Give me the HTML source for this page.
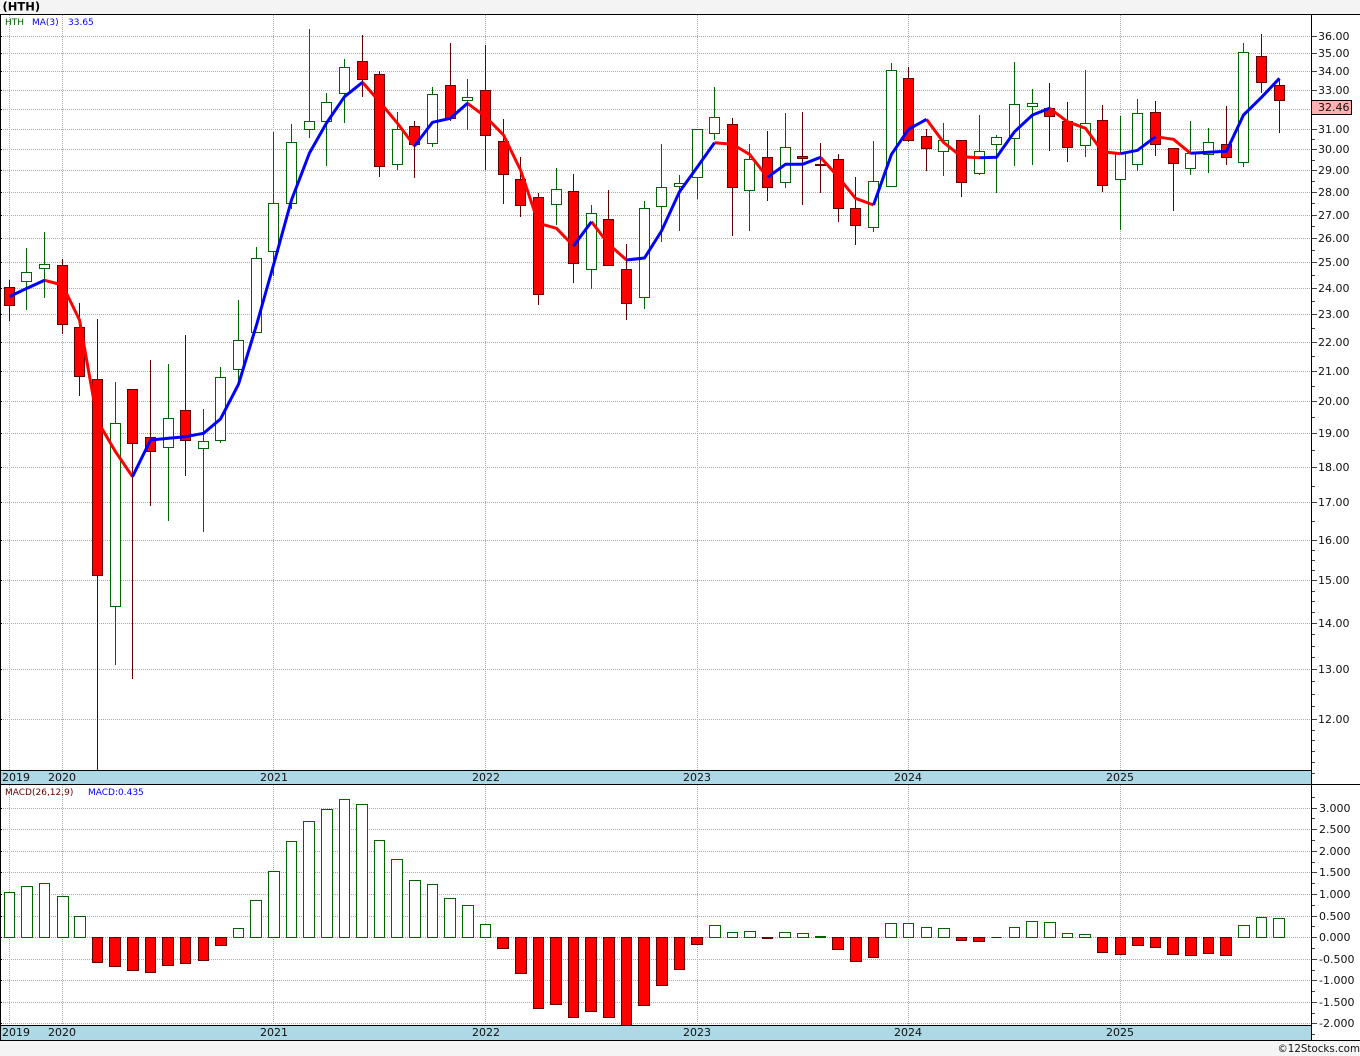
<!DOCTYPE html>
<html><head><meta charset="utf-8"><title>HTH</title>
<style>
html,body{margin:0;padding:0;background:#f4f4f4;width:1360px;height:1056px;overflow:hidden}
svg{display:block;font-family:"DejaVu Sans","Liberation Sans",sans-serif}
.c{shape-rendering:crispEdges}
</style></head><body>
<svg width="1360" height="1056" viewBox="0 0 1360 1056" xmlns="http://www.w3.org/2000/svg">
<rect x="0" y="0" width="1360" height="1056" fill="#f4f4f4"/>
<rect x="0" y="15" width="1360" height="1025" fill="#fff"/>
<rect class="c" x="1" y="771" width="1310" height="13" fill="#add8e6"/>
<rect class="c" x="1" y="1026" width="1310" height="14" fill="#add8e6"/>

<g class="c" stroke="#a9a9a9" stroke-width="1" stroke-dasharray="1 1" fill="none">
<path d="M1 36.5H1311M1 53.5H1311M1 71.5H1311M1 90.5H1311M1 109.5H1311M1 129.5H1311M1 149.5H1311M1 170.5H1311M1 192.5H1311M1 215.5H1311M1 238.5H1311M1 262.5H1311M1 288.5H1311M1 314.5H1311M1 342.5H1311M1 371.5H1311M1 401.5H1311M1 433.5H1311M1 467.5H1311M1 502.5H1311M1 540.5H1311M1 580.5H1311M1 623.5H1311M1 669.5H1311M1 719.5H1311"/>
<path d="M1 808.5H1311M1 829.5H1311M1 851.5H1311M1 872.5H1311M1 894.5H1311M1 916.5H1311M1 937.5H1311M1 959.5H1311M1 980.5H1311M1 1002.5H1311M1 1023.5H1311"/>
<path d="M9.5 15V770M62.5 15V770M273.5 15V770M485.5 15V770M697.5 15V770M908.5 15V770M1120.5 15V770"/>
<path d="M9.5 785V1025M62.5 785V1025M273.5 785V1025M485.5 785V1025M697.5 785V1025M908.5 785V1025M1120.5 785V1025"/>
</g>

<!-- wicks -->
<path class="c" fill="none" stroke="#006400" d="M26.5 248V310M44.5 232V298M115.5 382V665M168.5 364V521M203.5 409V532M220.5 367V443M238.5 300V383M256.5 247V333M273.5 132V276M291.5 124V209M309.5 29V138M326.5 93V166M344.5 59V123M397.5 112V170M432.5 87V147M467.5 79V130M556.5 168V225M591.5 205V289M644.5 201V309M661.5 144V242M679.5 175V231M697.5 129V199M714.5 87V140M749.5 144V231M785.5 113V188M873.5 141V232M891.5 63V186M943.5 123V176M979.5 115V175M996.5 135V193M1014.5 62V166M1032.5 89V165M1085.5 70V157M1120.5 116V230M1137.5 99V171M1190.5 121V175M1208.5 128V173M1243.5 43V167"/>
<path class="c" fill="none" stroke="#600000" d="M9.5 280V321M62.5 259V334M79.5 303V396M97.5 319V770M132.5 389V679M150.5 360V506M185.5 335V476M362.5 35V97M379.5 71V177M414.5 121V178M450.5 43V121M485.5 45V170M503.5 119V204M520.5 157V217M538.5 193V305M573.5 174V283M608.5 190V266M626.5 244V320M732.5 118V236M767.5 131V201M802.5 112V205M820.5 143V193M838.5 154V222M855.5 177V245M908.5 67V142M926.5 129V171M961.5 140V197M1049.5 83V151M1067.5 102V162M1102.5 105V192M1155.5 101V156M1173.5 148V211M1226.5 106V165M1261.5 34V93M1279.5 79V133"/>

<!-- bodies -->
<path class="c" fill="#fff" stroke="#006400" d="M21.5 272.5h10v9h-10zM39.5 264.5h10v4h-10zM110.5 423.5h10v183h-10zM163.5 418.5h10v29h-10zM198.5 441.5h10v7h-10zM215.5 377.5h10v63h-10zM233.5 340.5h10v29h-10zM251.5 258.5h10v74h-10zM268.5 203.5h10v48h-10zM286.5 142.5h10v61h-10zM304.5 121.5h10v8h-10zM321.5 102.5h10v19h-10zM339.5 67.5h10v26h-10zM392.5 129.5h10v35h-10zM427.5 94.5h10v49h-10zM462.5 97.5h10v3h-10zM551.5 189.5h10v15h-10zM586.5 213.5h10v56h-10zM639.5 208.5h10v89h-10zM656.5 187.5h10v19h-10zM674.5 183.5h10v3h-10zM692.5 129.5h10v48h-10zM709.5 117.5h10v16h-10zM744.5 159.5h10v31h-10zM780.5 147.5h10v35h-10zM868.5 181.5h10v46h-10zM886.5 70.5h10v116h-10zM938.5 140.5h10v11h-10zM974.5 151.5h10v22h-10zM991.5 137.5h10v7h-10zM1009.5 104.5h10v34h-10zM1027.5 103.5h10v3h-10zM1080.5 123.5h10v22h-10zM1115.5 153.5h10v26h-10zM1132.5 113.5h10v51h-10zM1185.5 153.5h10v15h-10zM1203.5 142.5h10v12h-10zM1238.5 52.5h10v110h-10z"/>
<path class="c" fill="#f00" stroke="#660000" d="M4.5 287.5h10v18h-10zM57.5 265.5h10v59h-10zM74.5 327.5h10v49h-10zM92.5 379.5h10v196h-10zM127.5 389.5h10v54h-10zM145.5 437.5h10v14h-10zM180.5 410.5h10v30h-10zM357.5 61.5h10v18h-10zM374.5 74.5h10v92h-10zM409.5 126.5h10v18h-10zM445.5 85.5h10v33h-10zM480.5 90.5h10v45h-10zM498.5 141.5h10v33h-10zM515.5 179.5h10v26h-10zM533.5 197.5h10v97h-10zM568.5 191.5h10v72h-10zM603.5 219.5h10v46h-10zM621.5 269.5h10v34h-10zM727.5 124.5h10v63h-10zM762.5 157.5h10v30h-10zM797.5 156.5h10v2h-10zM815.5 164.5h10v1h-10zM833.5 159.5h10v49h-10zM850.5 208.5h10v17h-10zM903.5 78.5h10v62h-10zM921.5 136.5h10v12h-10zM956.5 140.5h10v42h-10zM1044.5 108.5h10v8h-10zM1062.5 121.5h10v26h-10zM1097.5 120.5h10v65h-10zM1150.5 112.5h10v32h-10zM1168.5 148.5h10v15h-10zM1221.5 144.5h10v13h-10zM1256.5 56.5h10v26h-10zM1274.5 85.5h10v15h-10z"/>

<!-- moving average -->
<g fill="none" stroke-width="3" stroke-linejoin="round" stroke-linecap="butt">
<g stroke="#f00">
<polyline points="44.5,280.3 62.5,285 79.5,320 97.5,421 115.5,451.7 132.5,476.7"/>
<polyline points="362.5,82.3 379.5,101.7 397.5,123.3 414.5,146"/>
<polyline points="467.5,103.3 485.5,116.7 503.5,135 520.5,170 538.5,223.3 556.5,228.3 573.5,246"/>
<polyline points="591.5,221.7 608.5,244 626.5,260"/>
<polyline points="714.5,142.7 732.5,144.3 749.5,154.3 767.5,177.3"/>
<polyline points="820.5,157.3 838.5,177.3 855.5,198.3 873.5,205"/>
<polyline points="926.5,119.3 943.5,142.3 961.5,156.7 979.5,157.7"/>
<polyline points="1049.5,108.3 1067.5,121.7 1085.5,128.3 1102.5,151.7 1120.5,153.7"/>
<polyline points="1155.5,136.7 1173.5,139.3 1190.5,153.3"/>
</g>
<g stroke="#00f">
<polyline points="9.5,296.5 26.5,288.5 44.5,280.3"/>
<polyline points="132.5,476.7 150.5,440 168.5,438.3 185.5,436.7 203.5,433.3 220.5,419 238.5,384.3 256.5,325 273.5,265 291.5,200 309.5,153 326.5,123 344.5,96.7 362.5,82.3"/>
<polyline points="414.5,146 432.5,122.3 450.5,118.3 467.5,103.3"/>
<polyline points="573.5,246 591.5,221.7"/>
<polyline points="626.5,260 644.5,258 661.5,231 679.5,191.7 697.5,166.7 714.5,142.7"/>
<polyline points="767.5,177.3 785.5,164.3 802.5,164.3 820.5,157.3"/>
<polyline points="873.5,205 891.5,154.3 908.5,129.3 926.5,119.3"/>
<polyline points="979.5,157.7 996.5,157.3 1014.5,131.7 1032.5,115 1049.5,108.3"/>
<polyline points="1120.5,153.7 1137.5,150.3 1155.5,136.7"/>
<polyline points="1190.5,153.3 1208.5,152.3 1226.5,151.3 1243.5,115 1261.5,97.3 1279.5,78.3"/>
</g>
</g>

<!-- MACD -->
<path class="c" fill="#fff" stroke="#006400" d="M4.5 892.5h10V937.5H4.5zM21.5 886.5h11V937.5H21.5zM39.5 883.5h10V937.5H39.5zM57.5 896.5h11V937.5H57.5zM74.5 916.5h11V937.5H74.5zM233.5 928.5h10V937.5H233.5zM250.5 900.5h11V937.5H250.5zM268.5 871.5h11V937.5H268.5zM286.5 841.5h10V937.5H286.5zM303.5 821.5h11V937.5H303.5zM321.5 809.5h11V937.5H321.5zM339.5 799.5h10V937.5H339.5zM356.5 804.5h11V937.5H356.5zM374.5 840.5h10V937.5H374.5zM391.5 859.5h11V937.5H391.5zM409.5 880.5h11V937.5H409.5zM427.5 884.5h10V937.5H427.5zM444.5 898.5h11V937.5H444.5zM462.5 905.5h11V937.5H462.5zM480.5 924.5h10V937.5H480.5zM709.5 925.5h11V937.5H709.5zM727.5 932.5h10V937.5H727.5zM744.5 931.5h11V937.5H744.5zM779.5 932.5h11V937.5H779.5zM797.5 933.5h11V937.5H797.5zM815.5 936.5h10V937.5H815.5zM885.5 923.5h11V937.5H885.5zM903.5 923.5h10V937.5H903.5zM921.5 927.5h10V937.5H921.5zM938.5 928.5h11V937.5H938.5zM1009.5 927.5h10V937.5H1009.5zM1026.5 921.5h11V937.5H1026.5zM1044.5 922.5h11V937.5H1044.5zM1062.5 933.5h10V937.5H1062.5zM1079.5 934.5h11V937.5H1079.5zM1238.5 925.5h11V937.5H1238.5zM1256.5 917.5h10V937.5H1256.5zM1273.5 918.5h11V937.5H1273.5z"/>
<path class="c" fill="#f00" stroke="#660000" d="M92.5 937.5h10V962.5H92.5zM109.5 937.5h11V966.5H109.5zM127.5 937.5h11V970.5H127.5zM145.5 937.5h10V972.5H145.5zM162.5 937.5h11V965.5H162.5zM180.5 937.5h10V963.5H180.5zM198.5 937.5h10V960.5H198.5zM215.5 937.5h11V945.5H215.5zM497.5 937.5h11V948.5H497.5zM515.5 937.5h11V973.5H515.5zM533.5 937.5h10V1008.5H533.5zM550.5 937.5h11V1004.5H550.5zM568.5 937.5h10V1017.5H568.5zM585.5 937.5h11V1011.5H585.5zM603.5 937.5h11V1017.5H603.5zM621.5 937.5h10V1025.5H621.5zM638.5 937.5h11V1005.5H638.5zM656.5 937.5h11V985.5H656.5zM674.5 937.5h10V969.5H674.5zM691.5 937.5h11V944.5H691.5zM762.5 937.5h10V938.5H762.5zM832.5 937.5h11V949.5H832.5zM850.5 937.5h11V961.5H850.5zM868.5 937.5h10V957.5H868.5zM956.5 937.5h10V940.5H956.5zM973.5 937.5h11V941.5H973.5zM991.5 937.5h10V937.5H991.5zM1097.5 937.5h10V952.5H1097.5zM1115.5 937.5h10V954.5H1115.5zM1132.5 937.5h11V945.5H1132.5zM1150.5 937.5h10V947.5H1150.5zM1167.5 937.5h11V954.5H1167.5zM1185.5 937.5h11V955.5H1185.5zM1203.5 937.5h10V953.5H1203.5zM1220.5 937.5h11V955.5H1220.5z"/>

<!-- frame -->
<g class="c" fill="#000">
<rect x="0" y="14" width="1360" height="1"/>
<rect x="0" y="15" width="1" height="1025"/>
<rect x="0" y="770" width="1311" height="1"/>
<rect x="0" y="784" width="1360" height="1"/>
<rect x="0" y="1025" width="1311" height="1"/>
<rect x="0" y="1040" width="1360" height="1"/>
<rect x="1311" y="14" width="1" height="1026"/>
</g>

<!-- left ticks -->
<path class="c" fill="none" stroke="#000" d="M1 36.5H2M1 53.5H2M1 71.5H2M1 90.5H2M1 109.5H2M1 129.5H2M1 149.5H2M1 170.5H2M1 192.5H2M1 215.5H2M1 238.5H2M1 262.5H2M1 288.5H2M1 314.5H2M1 342.5H2M1 371.5H2M1 401.5H2M1 433.5H2M1 467.5H2M1 502.5H2M1 540.5H2M1 580.5H2M1 623.5H2M1 669.5H2M1 719.5H2M1 808.5H2M1 829.5H2M1 851.5H2M1 872.5H2M1 894.5H2M1 916.5H2M1 937.5H2M1 959.5H2M1 980.5H2M1 1002.5H2M1 1023.5H2"/>

<!-- ticks -->
<path class="c" fill="none" stroke="#444" d="M1312 36.5H1317M1312 53.5H1317M1312 71.5H1317M1312 90.5H1317M1312 129.5H1317M1312 149.5H1317M1312 170.5H1317M1312 192.5H1317M1312 215.5H1317M1312 238.5H1317M1312 262.5H1317M1312 288.5H1317M1312 314.5H1317M1312 342.5H1317M1312 371.5H1317M1312 401.5H1317M1312 433.5H1317M1312 467.5H1317M1312 502.5H1317M1312 540.5H1317M1312 580.5H1317M1312 623.5H1317M1312 669.5H1317M1312 719.5H1317M1312 808.5H1317M1312 829.5H1317M1312 851.5H1317M1312 872.5H1317M1312 894.5H1317M1312 916.5H1317M1312 937.5H1317M1312 959.5H1317M1312 980.5H1317M1312 1002.5H1317M1312 1023.5H1317"/>
<path class="c" fill="none" stroke="#444" d="M1312 139.5H1315M1312 160.5H1315M1312 181.5H1315M1312 203.5H1315M1312 226.5H1315M1312 250.5H1315M1312 275.5H1315M1312 301.5H1315M1312 328.5H1315M1312 356.5H1315M1312 386.5H1315M1312 417.5H1315M1312 450.5H1315M1312 486.5H1315M1312 521.5H1315M1312 550.5H1315M1312 560.5H1315M1312 570.5H1315M1312 591.5H1315M1312 601.5H1315M1312 612.5H1315M1312 634.5H1315M1312 646.5H1315M1312 657.5H1315M1312 681.5H1315M1312 694.5H1315M1312 706.5H1315M1312 730.5H1315M1312 740.5H1315M1312 751.5H1315M1312 762.5H1315M1312 773.5H1315M1312 797.5H1315M1312 818.5H1315M1312 840.5H1315M1312 862.5H1315M1312 883.5H1315M1312 905.5H1315M1312 926.5H1315M1312 948.5H1315M1312 970.5H1315M1312 991.5H1315M1312 1013.5H1315M1312 1034.5H1315"/>

<!-- price box -->
<rect class="c" x="1311.5" y="100.5" width="40" height="14" fill="#ffb0b0" stroke="#000"/>

<g font-size="11" fill="#111">
<text x="1318" y="40">36.00</text><text x="1318" y="57">35.00</text><text x="1318" y="75">34.00</text><text x="1318" y="94">33.00</text>
<text x="1318" y="111">32.46</text>
<text x="1318" y="133">31.00</text><text x="1318" y="153">30.00</text><text x="1318" y="174">29.00</text><text x="1318" y="196">28.00</text><text x="1318" y="219">27.00</text><text x="1318" y="242">26.00</text><text x="1318" y="266">25.00</text><text x="1318" y="292">24.00</text><text x="1318" y="318">23.00</text><text x="1318" y="346">22.00</text><text x="1318" y="375">21.00</text><text x="1318" y="405">20.00</text><text x="1318" y="437">19.00</text><text x="1318" y="471">18.00</text><text x="1318" y="506">17.00</text><text x="1318" y="544">16.00</text><text x="1318" y="584">15.00</text><text x="1318" y="627">14.00</text><text x="1318" y="673">13.00</text><text x="1318" y="723">12.00</text>
<text x="1319" y="812">3.000</text><text x="1319" y="833">2.500</text><text x="1319" y="855">2.000</text><text x="1319" y="876">1.500</text><text x="1319" y="898">1.000</text><text x="1319" y="920">0.500</text><text x="1319" y="941">0.000</text><text x="1319" y="963">-0.500</text><text x="1319" y="984">-1.000</text><text x="1319" y="1006">-1.500</text><text x="1319" y="1027">-2.000</text>
<text x="2" y="781">2019</text><text x="48" y="781">2020</text><text x="260" y="781">2021</text><text x="472" y="781">2022</text><text x="683" y="781">2023</text><text x="894" y="781">2024</text><text x="1106" y="781">2025</text>
<text x="2" y="1036">2019</text><text x="48" y="1036">2020</text><text x="260" y="1036">2021</text><text x="472" y="1036">2022</text><text x="683" y="1036">2023</text><text x="894" y="1036">2024</text><text x="1106" y="1036">2025</text>
</g>

<text x="2.5" y="10.5" font-size="11.5" font-weight="bold" fill="#000">(HTH)</text>
<g font-size="9">
<text x="5" y="25" fill="#006400">HTH</text>
<text x="32" y="25" fill="#0000ff">MA(3)</text>
<text x="68" y="25" fill="#0000ff">33.65</text>
<text x="5" y="795" fill="#660000">MACD(26,12,9)</text>
<text x="88" y="795" fill="#0000ff">MACD:0.435</text>
</g>
<text x="1360" y="1052" font-size="10.3" text-anchor="end" fill="#111">©12Stocks.com</text>
</svg>
</body></html>
